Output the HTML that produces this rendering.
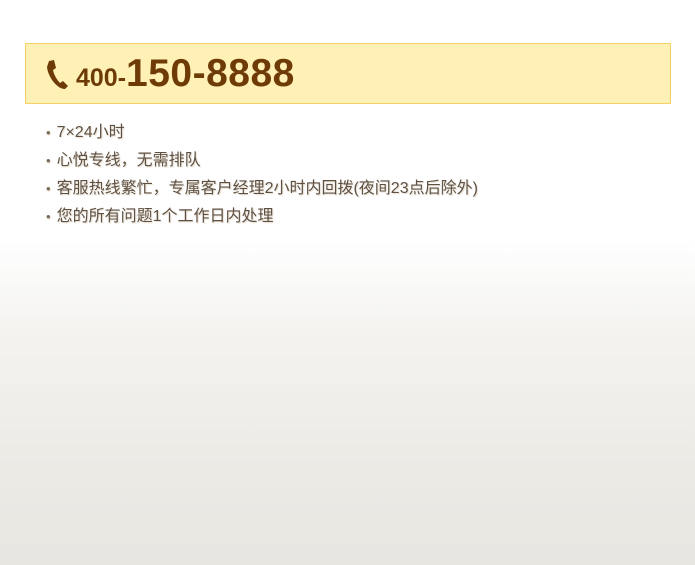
<!DOCTYPE html>
<html><head><meta charset="utf-8"><style>
html,body{margin:0;padding:0}
body{width:695px;height:565px;overflow:hidden;background:linear-gradient(to bottom,#fff 0,#fff 240px,#f4f3f0 330px,#ebeae5 470px,#e8e6e1 565px);font-family:"Liberation Sans","Noto Sans CJK SC",sans-serif;position:relative}
.box{position:absolute;left:25px;top:43px;width:644px;height:59px;background:#fff0b6;border:1px solid #f5cf68}
.phone{position:absolute;left:19px;top:15px}
.num{position:absolute;left:50px;top:8px;color:#6e3b06;font-weight:bold;white-space:nowrap}
.s{font-size:25px}.b{font-size:39px;letter-spacing:0.5px}
ul{position:absolute;left:46px;top:120px;margin:0;padding:0;list-style:none;color:#5e5144;font-size:16px}
li{height:28px;line-height:25px;text-shadow:1px 1px 1px #e6dccd}
li:before{content:"•";color:#7a6a58;margin-right:6px;font-size:13px}
</style></head><body>
<div class="box">
<svg class="phone" width="24" height="32" viewBox="0 0 24 32"><path d="M4 2 L9 1 L11 9 L8 11 C9 16 12 21 15 24 L18 22 L23 27 L20 30 C12 30 3 18 2 8 Z" fill="#6e3b06"/></svg>
<div class="num"><span class="s">400-</span><span class="b">150-8888</span></div>
</div>
<ul>
<li>7×24小时</li>
<li>心悦专线，无需排队</li>
<li>客服热线繁忙，专属客户经理2小时内回拨(夜间23点后除外)</li>
<li>您的所有问题1个工作日内处理</li>
</ul>
</body></html>
